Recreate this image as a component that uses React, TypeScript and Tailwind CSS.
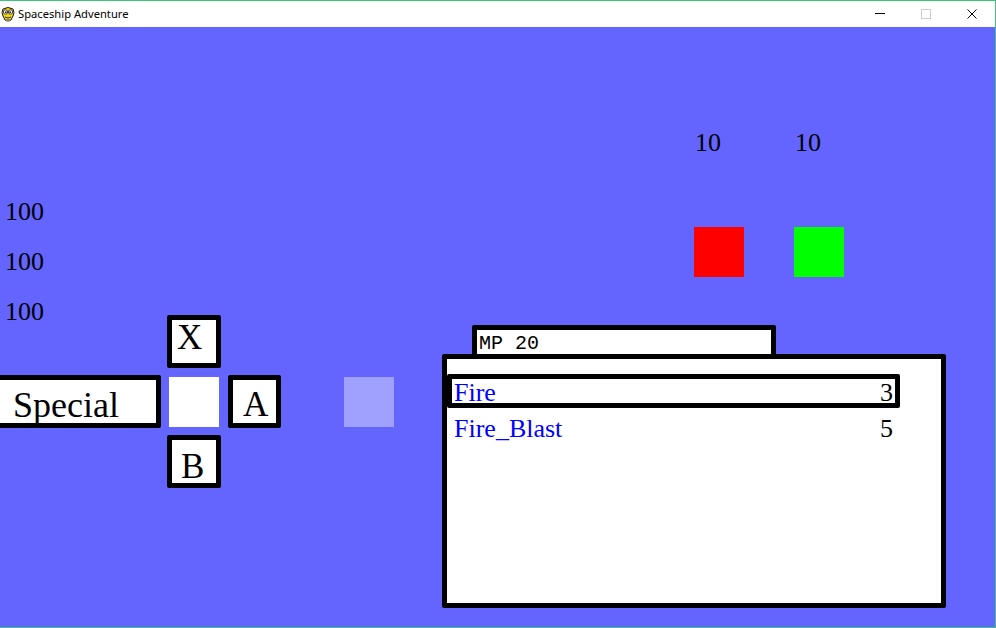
import React from "react";

// pygame window: white Win10 title bar over a 995x600 game surface

function SnakeIcon() {
  return (
    <svg width="16" height="16" viewBox="0 0 16 16" className="shrink-0">
      <path d="M3 3 Q8 0 13 3 Q15 7 13 10 L11 14 Q8 16 5 14 L3 10 Q1 7 3 3 Z" fill="#f5d90a" stroke="#1a1a1a" strokeWidth="1" />
      <circle cx="5.5" cy="6" r="2.2" fill="#ffffff" stroke="#1a1a1a" strokeWidth="0.8" />
      <circle cx="10.5" cy="6" r="2.2" fill="#ffffff" stroke="#1a1a1a" strokeWidth="0.8" />
      <circle cx="5.8" cy="6.2" r="0.9" fill="#1a1a1a" />
      <circle cx="10.2" cy="6.2" r="0.9" fill="#1a1a1a" />
      <path d="M5 11 Q8 13 11 11" fill="none" stroke="#1a1a1a" strokeWidth="0.9" />
      <rect x="6" y="13" width="4" height="2.5" fill="#8a8a8a" />
    </svg>
  );
}

function TitleBar() {
  return (
    <div className="flex h-[26px] w-[995px] shrink-0 items-center bg-white">
      <div className="flex items-center">
        <SnakeIcon />
      </div>
      <span className="ml-[2px] font-['Noto_Sans',sans-serif] text-[11.2px] leading-none text-black">
        Spaceship Adventure
      </span>
      <div className="ml-auto flex h-full">
        <div className="flex w-[46px] items-center justify-center">
          <span className="-mt-[1px] h-px w-[10px] bg-black" />
        </div>
        <div className="flex w-[46px] items-center justify-center">
          <span className="h-[10px] w-[10px] border border-[#cccccc]" />
        </div>
        <div className="flex w-[46px] items-center justify-center">
          <svg width="10" height="10" viewBox="0 0 10 10">
            <path d="M0.5 0.5 L9.5 9.5 M9.5 0.5 L0.5 9.5" stroke="#000" strokeWidth="1" />
          </svg>
        </div>
      </div>
    </div>
  );
}

function SpellRow({ name, cost, selected }: { name: string; cost: number; selected?: boolean }) {
  return (
    <div
      className={`flex h-[34px] w-[453px] items-start justify-between border-[5px] pl-[2px] pr-[2px] pt-[1px] text-[26px] leading-none ${
        selected ? "rounded-[2px] border-black" : "mt-[2px] border-transparent"
      }`}
    >
      <span className="text-[#0000ff]">{name}</span>
      <span className="text-black">{cost}</span>
    </div>
  );
}

export default function App() {
  return (
    <div className="flex h-[628px] w-[996px] flex-col overflow-hidden border-b border-r border-t border-[#3cc47c] bg-white">
      <TitleBar />
      <div className="relative h-[600px] w-[995px] overflow-hidden bg-[#6464ff] font-['Liberation_Serif','Times_New_Roman',serif] text-black">
        {/* player stats */}
        <div className="absolute left-[5px] top-[172px] flex flex-col gap-[24px] text-[26px] leading-none">
          <span>100</span>
          <span>100</span>
          <span>100</span>
        </div>

        {/* enemies */}
        <div className="absolute left-[694px] top-[103px] flex gap-[50px]">
          <div className="flex w-[50px] flex-col">
            <span className="h-[26px] pl-[1px] text-[26px] leading-none">10</span>
            <div className="mt-[71px] h-[50px] w-[50px] bg-[#ff0000]" />
          </div>
          <div className="flex w-[50px] flex-col">
            <span className="h-[26px] pl-[1px] text-[26px] leading-none">10</span>
            <div className="mt-[71px] h-[50px] w-[50px] bg-[#00ff00]" />
          </div>
        </div>

        {/* button pad */}
        <div className="absolute left-[-5px] top-[288px] grid grid-cols-[166px_55px_53px] grid-rows-[53px_53px_53px] gap-x-[6px] gap-y-[7px] text-[35px] leading-none">
          <div />
          <div className="h-[53px] w-[54px] rounded-[2px] border-[5px] border-black bg-white pl-[5px] pt-0">X</div>
          <div />
          <div className="h-[53px] w-[166px] rounded-[2px] border-[5px] border-black bg-white pl-[13px] pt-[7px] text-[36px]">Special</div>
          <div className="ml-[2px] mt-[2px] h-[50px] w-[50px] bg-white" />
          <div className="h-[53px] w-[53px] rounded-[2px] border-[5px] border-black bg-white pl-[10px] pt-[7px]">A</div>
          <div />
          <div className="h-[53px] w-[54px] rounded-[2px] border-[5px] border-black bg-white pl-[9px] pt-[9px]">B</div>
          <div />
        </div>

        <div className="absolute left-[344px] top-[350px] h-[50px] w-[50px] bg-[#a0a0ff]" />

        {/* spell menu */}
        <div className="absolute left-[442px] top-[298px] flex flex-col">
          <div className="ml-[30px] h-[34px] w-[304px] rounded-[2px] border-[5px] border-black bg-white pl-[2px] pt-[4px] font-['Liberation_Mono','Courier_New',monospace] text-[20px] leading-none">
            MP 20
          </div>
          <div className="-mt-[5px] h-[254px] w-[504px] rounded-[2px] border-[5px] border-black bg-white pt-[15px]">
            <SpellRow name="Fire" cost={3} selected />
            <SpellRow name="Fire_Blast" cost={5} />
          </div>
        </div>
      </div>
    </div>
  );
}
